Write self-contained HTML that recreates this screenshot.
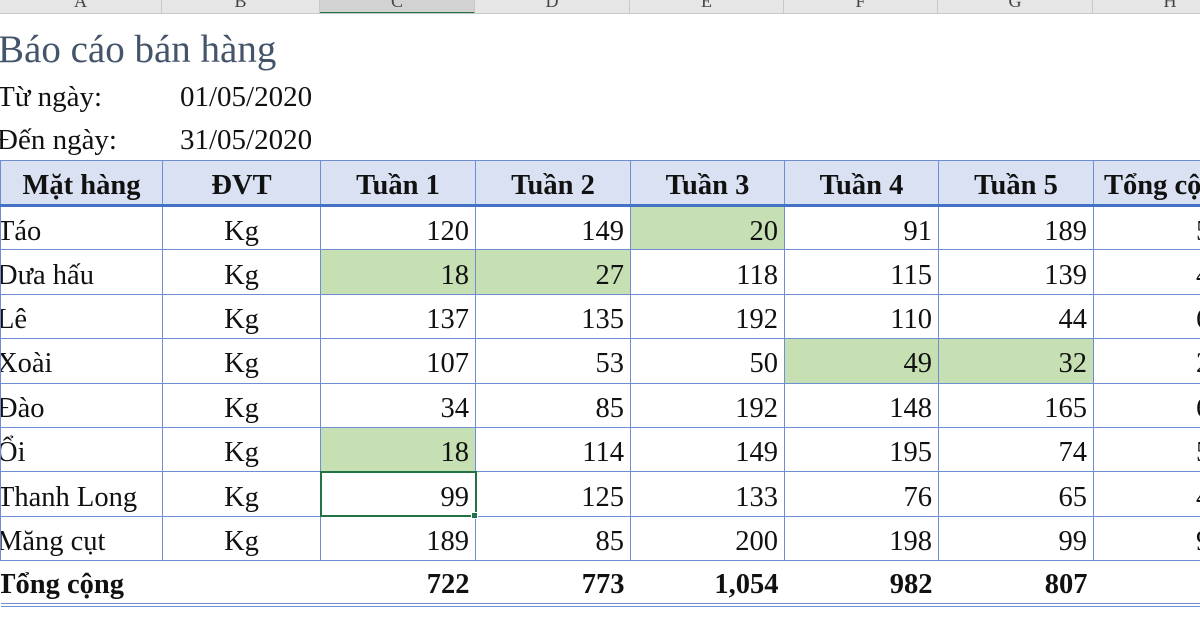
<!DOCTYPE html>
<html><head><meta charset="utf-8"><style>
*{margin:0;padding:0;box-sizing:border-box}
body{width:1200px;height:630px;overflow:hidden;background:#fff;position:relative;font-family:"Liberation Serif",serif;color:#111}
.hdr{position:absolute;top:0;left:0;width:1200px;height:14px;background:#e6e6e6;border-bottom:1px solid #c8c8c8;overflow:hidden}
.hc{position:absolute;top:-9px;height:23px;font-size:18px;text-align:center;color:#444;border-right:1px solid #c8c8c8}
.t{position:absolute;white-space:nowrap}
table{position:absolute;left:0;top:160px;width:1253px;border-collapse:collapse;table-layout:fixed;font-size:28.5px}
td{border:1px solid #6d8fd2;height:44.4px;padding:0 6px;text-align:right;white-space:nowrap;overflow:hidden;line-height:28px;padding-top:7px}
td.l{text-align:left;padding-left:0;text-indent:-4px}
td.c{text-align:center}
td.g{background:#c6e0b4}
td.x{text-align:left;padding-left:0;text-indent:102px}
tr.h td{background:#d9e1f2;font-weight:bold;text-align:center;height:45px;border-bottom:3px solid #4472c4}
tr.tot td{font-weight:bold;border-left:none;border-right:none;border-bottom:4px double #6d8fd2;height:44px}
</style></head><body>
<div class="hdr">
<div class="hc" style="left:0;width:162px">A</div>
<div class="hc" style="left:162px;width:158px">B</div>
<div class="hc" style="left:320px;width:155px;background:#d2d2d2;border-bottom:2px solid #217346">C</div>
<div class="hc" style="left:475px;width:155px">D</div>
<div class="hc" style="left:630px;width:154px">E</div>
<div class="hc" style="left:784px;width:154px">F</div>
<div class="hc" style="left:938px;width:155px">G</div>
<div class="hc" style="left:1093px;width:155px">H</div>
</div>
<div class="t" style="left:-2px;top:27px;font-size:39px;color:#44546a">Báo cáo bán hàng</div>
<div class="t" style="left:-3px;top:81px;font-size:29px">Từ ngày:</div>
<div class="t" style="left:180px;top:81px;font-size:29px">01/05/2020</div>
<div class="t" style="left:-3px;top:124px;font-size:29px">Đến ngày:</div>
<div class="t" style="left:180px;top:124px;font-size:29px">31/05/2020</div>
<table>
<colgroup><col style="width:162px"><col style="width:158px"><col style="width:155px"><col style="width:155px"><col style="width:154px"><col style="width:154px"><col style="width:155px"><col style="width:160px"></colgroup>
<tr class="h"><td>Mặt hàng</td><td>ĐVT</td><td>Tuần 1</td><td>Tuần 2</td><td>Tuần 3</td><td>Tuần 4</td><td>Tuần 5</td><td style="text-align:left;padding-left:10px">Tổng cộng</td></tr>
<tr><td class="l">Táo</td><td class="c">Kg</td><td>120</td><td>149</td><td class="g">20</td><td>91</td><td>189</td><td class="x">569</td></tr>
<tr><td class="l">Dưa hấu</td><td class="c">Kg</td><td class="g">18</td><td class="g">27</td><td>118</td><td>115</td><td>139</td><td class="x">417</td></tr>
<tr><td class="l">Lê</td><td class="c">Kg</td><td>137</td><td>135</td><td>192</td><td>110</td><td>44</td><td class="x">618</td></tr>
<tr><td class="l">Xoài</td><td class="c">Kg</td><td>107</td><td>53</td><td>50</td><td class="g">49</td><td class="g">32</td><td class="x">291</td></tr>
<tr><td class="l">Đào</td><td class="c">Kg</td><td>34</td><td>85</td><td>192</td><td>148</td><td>165</td><td class="x">624</td></tr>
<tr><td class="l">Ổi</td><td class="c">Kg</td><td class="g">18</td><td>114</td><td>149</td><td>195</td><td>74</td><td class="x">550</td></tr>
<tr><td class="l">Thanh Long</td><td class="c">Kg</td><td style="outline:2px solid #217346;outline-offset:-1px">99</td><td>125</td><td>133</td><td>76</td><td>65</td><td class="x">498</td></tr>
<tr><td class="l">Măng cụt</td><td class="c">Kg</td><td>189</td><td>85</td><td>200</td><td>198</td><td>99</td><td class="x">971</td></tr>
<tr class="tot"><td class="l">Tổng cộng</td><td></td><td>722</td><td>773</td><td>1,054</td><td>982</td><td>807</td><td></td></tr>
</table>
<div style="position:absolute;left:471px;top:512px;width:7px;height:7px;background:#217346;border:1px solid #fff"></div>
</body></html>
